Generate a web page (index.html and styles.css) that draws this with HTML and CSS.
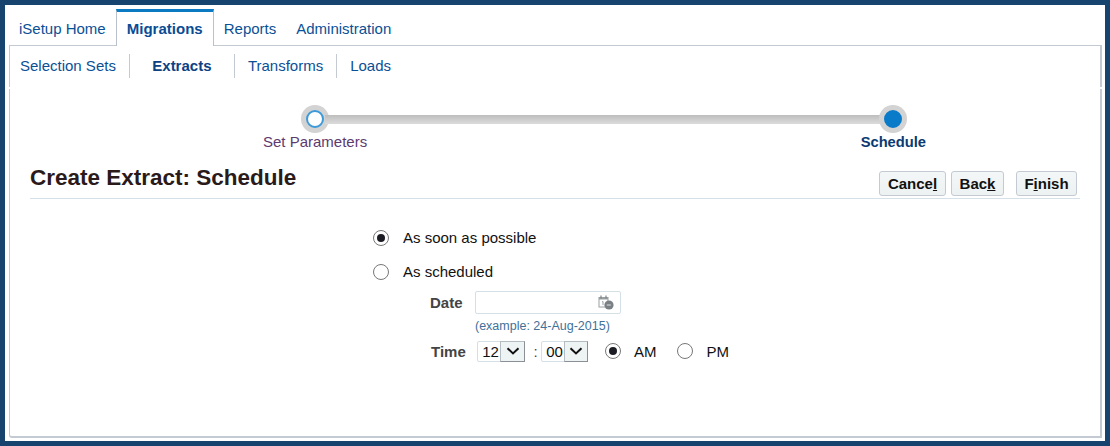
FILE: index.html
```html
<!DOCTYPE html>
<html lang="en">
<head>
<meta charset="utf-8">
<title>Create Extract: Schedule</title>
<link rel="stylesheet" href="styles.css">
</head>
<body>
<div class="frame">
  <nav class="tabs">
    <a class="tab">iSetup Home</a>
    <a class="tab tab-active">Migrations</a>
    <a class="tab tab-reports">Reports</a>
    <a class="tab">Administration</a>
  </nav>
  <div class="panel">
    <div class="subnav">
      <a class="sub sub-first">Selection Sets</a>
      <a class="sub sub-active">Extracts</a>
      <a class="sub sub-transforms">Transforms</a>
      <a class="sub sub-last">Loads</a>
    </div>
    <div class="panel-body">
      <div class="train">
        <div class="train-track">
          <span class="stop"><span class="stop-inner"></span></span>
          <span class="bar"></span>
          <span class="stop"><span class="stop-inner stop-current"></span></span>
        </div>
        <div class="train-labels">
          <span class="train-visited">Set Parameters</span>
          <span class="train-now">Schedule</span>
        </div>
      </div>
      <div class="header">
        <h1 class="title">Create Extract: Schedule</h1>
        <div class="actions">
          <button class="btn btn-cancel">Cance<u>l</u></button>
          <button class="btn btn-back">Bac<u>k</u></button>
          <button class="btn btn-finish">F<u>i</u>nish</button>
        </div>
      </div>
      <div class="form">
        <label class="choice choice-first"><span class="radio radio-on"></span><span class="choice-text">As soon as possible</span></label>
        <label class="choice choice-second"><span class="radio"></span><span class="choice-text">As scheduled</span></label>
        <div class="field-date">
          <span class="field-label">Date</span>
          <div class="date-input">
            <svg class="cal" width="16" height="15" viewBox="0 0 16 15">
              <rect x="1" y="2.5" width="9" height="9.5" fill="#fff" stroke="#9a9fa2"/>
              <rect x="1" y="2.5" width="9" height="2" fill="#9a9fa2"/>
              <path d="M3 .5v3M8 .5v3" stroke="#7f8487" stroke-width="1.2"/>
              <path d="M4 7l1-.6V10" fill="none" stroke="#9a9fa2"/>
              <circle cx="11" cy="10" r="4.6" fill="#7b8084"/>
              <path d="M8.8 10h4" stroke="#dfe2e4"/>
            </svg>
          </div>
        </div>
        <div class="hint">(example: 24-Aug-2015)</div>
        <div class="field-time">
          <span class="field-label">Time</span>
          <span class="select select-hour"><span class="select-val">12</span><span class="select-btn"><svg width="14" height="8" viewBox="0 0 14 8"><path d="M1.5 1.2L7 6.4l5.5-5.2" fill="none" stroke="#111" stroke-width="2"/></svg></span></span>
          <span class="colon">:</span>
          <span class="select select-min"><span class="select-val">00</span><span class="select-btn"><svg width="14" height="8" viewBox="0 0 14 8"><path d="M1.5 1.2L7 6.4l5.5-5.2" fill="none" stroke="#111" stroke-width="2"/></svg></span></span>
          <label class="choice-inline ampm-am"><span class="radio radio-on"></span><span>AM</span></label>
          <label class="choice-inline ampm-pm"><span class="radio"></span><span>PM</span></label>
        </div>
      </div>
    </div>
  </div>
</div>
</body>
</html>
```
FILE: styles.css
```css
* { box-sizing: border-box; }
html, body { margin: 0; padding: 0; }
body { width: 1110px; height: 446px; overflow: hidden; font-family: "Liberation Sans", Arial, sans-serif; background: #fff; }
.frame { width: 1110px; height: 446px; border: 5px solid #17446f; background: #fff; padding: 4px 3px 3px 4px; display: flex; flex-direction: column; }

.tabs { display: flex; height: 36px; position: relative; z-index: 1; }
.tab { font-size: 15px; line-height: 17px; color: #0a5096; padding: 11px 9px 0 10px; height: 36px; }
.tab:first-child { padding-right: 10px; }
.tab-reports { padding-right: 10px; }
.tab-active { flex: none; width: 98px; height: 37px; padding: 8px 0 0 0; text-align: center; font-weight: bold; border-top: 3px solid #0a7ac2; border-left: 1px solid #b9c2ca; border-right: 1px solid #b9c2ca; background: #fff; color: #0a4c94; }

.panel { flex: 1; border-top: 1px solid #c3cad1; display: flex; flex-direction: column; }

.subnav { display: flex; height: 41px; align-items: flex-start; padding-top: 8px; border: solid #c3cad1; border-width: 0 2px 0 1px; }
.sub { font-size: 15px; color: #0a5096; height: 24px; line-height: 24px; border-right: 1px solid #c3cad1; }
.sub-first { padding: 0 13px 0 10px; }
.sub-active { width: 105px; text-align: center; font-weight: bold; color: #0d4183; }
.sub-transforms { padding: 0 13px 0 13px; }
.sub-last { padding: 0 0 0 13px; border-right: 0; }

.panel-body { flex: 1; margin-top: 2px; padding: 0 20px 0 20px; border: solid #c3cad1; border-width: 0 2px 2px 1px; border-radius: 0 0 0 3px; }

.train { margin-left: 233px; width: 663px; padding-top: 16px; }
.train-track { display: flex; align-items: center; height: 28px; padding: 0 19px 0 38px; }
.stop { width: 28px; height: 28px; border-radius: 50%; background: #d3d3d3; display: flex; align-items: center; justify-content: center; flex: none; }
.stop-inner { width: 18px; height: 18px; border-radius: 50%; background: #fff; border: 2px solid #3d9ad9; }
.stop-current { background: #0a7bc9; border-color: #0a7bc9; }
.bar { flex: 1; height: 9px; margin: 0 -4px; background: linear-gradient(#bdbdbd, #dcdcdc); }
.train-labels { display: flex; justify-content: space-between; font-size: 15px; line-height: 16px; margin-top: 1px; }
.train-visited { color: #5d3a6f; }
.train-now { color: #0a3a72; font-weight: bold; font-size: 14.7px; }

.header { display: flex; justify-content: space-between; align-items: flex-start; height: 40px; margin-top: 9px; border-bottom: 1px solid #d5e0e8; padding-right: 3px; }
.title { margin: 0; font-size: 22.5px; line-height: 26px; font-weight: bold; color: #2a1a1a; padding-top: 6px; }
.actions { display: flex; padding-top: 12px; }
.btn { height: 25px; padding: 0; font: bold 15px "Liberation Sans", Arial, sans-serif; color: #111; background: linear-gradient(#f4f7f7, #ecf1f2); border: 1px solid #c3cad1; border-radius: 3px; }
.btn-cancel { width: 67px; margin-right: 5px; }
.btn-back { width: 53px; margin-right: 12px; }
.btn-finish { width: 61px; }

.form { padding-left: 343px; font-size: 15px; color: #111; }
.choice { display: flex; align-items: center; gap: 14px; height: 20px; }
.choice-first { margin-top: 29px; }
.choice-second { margin-top: 14px; }
.choice-text { margin-top: -2px; }
.radio { width: 16px; height: 16px; border: 1px solid #777; border-radius: 50%; background: #fff; display: inline-flex; align-items: center; justify-content: center; flex: none; }
.radio-on::after { content: ""; width: 8px; height: 8px; border-radius: 50%; background: #1c1c24; }

.field-label { font-weight: bold; color: #444; }
.field-date { display: flex; align-items: center; height: 23px; margin-top: 9px; padding-left: 57px; }
.field-date .field-label { width: 45px; }
.date-input { width: 146px; height: 23px; border: 1px solid #d5dfe6; border-radius: 2px; background: #fff; display: flex; justify-content: flex-end; align-items: center; padding-right: 6px; }
.hint { font-size: 12.5px; line-height: 14px; color: #3f7199; padding-left: 102px; margin-top: 5px; }
.field-time { display: flex; align-items: center; height: 22px; margin-top: 7px; padding-left: 58px; }
.field-time .field-label { width: 46px; }
.select { display: inline-flex; height: 21px; border: 1px solid #d5dfe6; border-radius: 2px; background: #fff; }
.select-val { width: 22px; text-align: center; line-height: 19px; font-size: 15px; padding-left: 3px; }
.select-btn { width: 25px; background: #eef4f4; border-left: 1px solid #b5bcc2; border-right: 1px solid #8a9096; border-bottom: 1px solid #8a9096; border-top: 1px solid #b5bcc2; display: flex; align-items: center; justify-content: center; margin: -1px -1px -1px 0; }
.colon { width: 16px; text-align: center; color: #444; padding-left: 5px; }
.select-min { margin-right: 17px; }
.select-min .select-btn { width: 24px; }
.choice-inline { display: inline-flex; align-items: center; gap: 13px; }
.ampm-am { margin-right: 20px; }
.ampm-pm { gap: 14px; }
```
